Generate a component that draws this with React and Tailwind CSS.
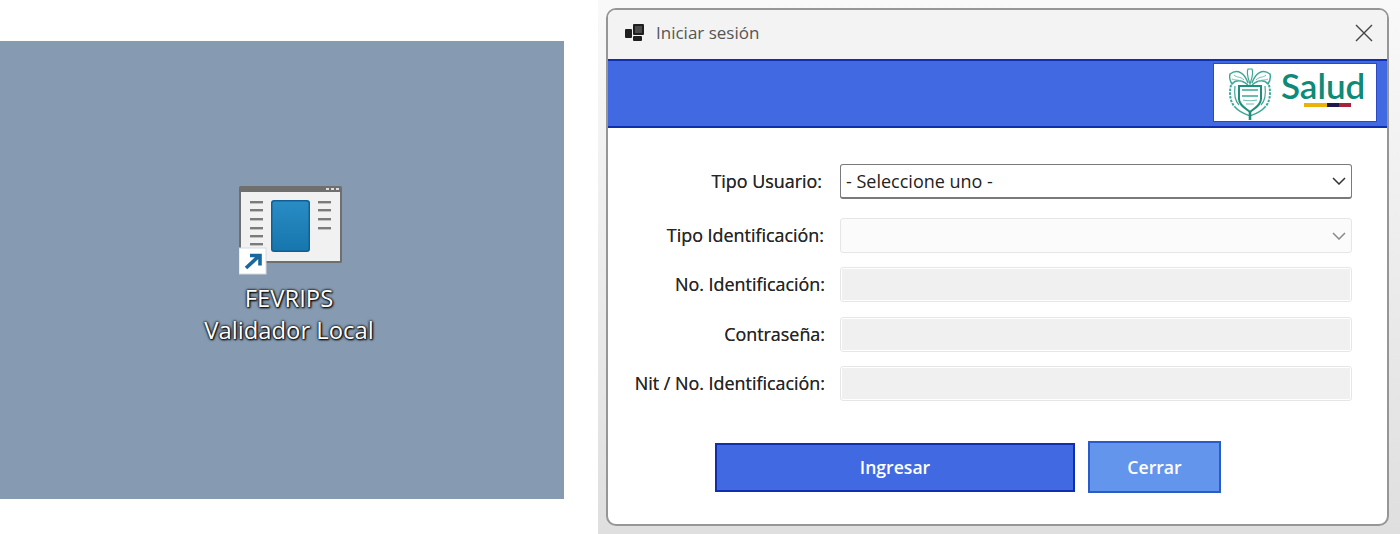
import React from "react";

const font = { fontFamily: '"Open Sans", "Noto Sans", sans-serif' };

function DesktopIcon() {
  return (
    <svg width="106" height="92" viewBox="0 0 106 92" className="block">
      <defs>
        <linearGradient id="pane" x1="0" y1="0" x2="0" y2="1">
          <stop offset="0" stopColor="#2a8cc4" />
          <stop offset="1" stopColor="#1676ae" />
        </linearGradient>
      </defs>
      <rect x="0" y="1" width="103" height="77" fill="#6f6f6f" rx="1.5" />
      <rect x="2" y="7" width="99" height="69" fill="#f1f1f1" />
      <rect x="87" y="3" width="3" height="2" fill="#dedede" />
      <rect x="92" y="3" width="3" height="2" fill="#dedede" />
      <rect x="97" y="3" width="3" height="2" fill="#dedede" />
      {[16, 24, 33, 42, 50, 58].map((y) => (
        <rect key={y} x="11" y={y} width="13" height="2.4" fill="#7b7b7b" />
      ))}
      {[16, 24, 33, 42].map((y) => (
        <rect key={y} x="79" y={y} width="13" height="2.4" fill="#7b7b7b" />
      ))}
      <rect x="32" y="15" width="39" height="52" rx="3" fill="#0f5f95" />
      <rect x="33.5" y="16.5" width="36" height="49" rx="2" fill="url(#pane)" />
      <rect x="0" y="63" width="27" height="26" fill="#fff" stroke="#d5dbe0" />
      <path d="M7 83 L20 71 M11 70.5 L21 70.5 L21 80.5" fill="none" stroke="#17689f" strokeWidth="3.6" />
    </svg>
  );
}

function Shield() {
  return (
    <svg width="46" height="54" viewBox="0 0 46 54" fill="none" stroke="#3fa797" strokeWidth="1" className="block">
      <path d="M21 17 C18 8 11 2 3 8 C2 12 3 15 5 18 C8 14 14 13 21 19" strokeWidth="1.5" />
      <path d="M25 17 C28 8 35 2 43 8 C44 12 43 15 41 18 C38 14 32 13 25 19" strokeWidth="1.5" />
      <path d="M7 9 C10 12 13 10 17 14 M39 9 C36 12 33 10 29 14 M5 13 C9 15 12 13 15 16 M41 13 C37 15 34 13 31 16" strokeWidth="1" stroke="#6fc0b3" />
      <path d="M21 3 C19 7 21 12 23 18 C25 12 27 7 25 3 Z" strokeWidth="1.2" />
      <path d="M4 19 C2 27 3 36 8 41 M42 19 C44 27 43 36 38 41" strokeWidth="2" strokeDasharray="2.5 1.2" />
      <path d="M8 20 C7 28 8 35 12 39 M38 20 C39 28 38 35 34 39" strokeWidth="1.2" />
      <path d="M12 20 H34 V33 C34 39 28 42 23 46 C18 42 12 39 12 33 Z" strokeWidth="2" stroke="#1e8f7d" />
      <path d="M15 24 H31 M15 30 H31" strokeWidth="1.3" />
      <path d="M16 34 C19 35 27 35 30 34 M19 38 H27" strokeWidth="1.2" stroke="#6fc0b3" />
      <path d="M8 41 C12 46 18 48 23 50 C28 48 34 46 38 41" strokeWidth="1.4" />
      <path d="M23 46 V54" strokeWidth="2.6" stroke="#1e8f7d" />
    </svg>
  );
}

function Chevron({ color }) {
  return (
    <svg width="14" height="8" viewBox="0 0 14 8" fill="none" stroke={color} strokeWidth="1.5" className="block">
      <path d="M1 1 L7 7 L13 1" />
    </svg>
  );
}

function Row({ label, className, labelClass, children }) {
  return (
    <div className={`flex items-center h-[35px] ${className}`}>
      <div className={`w-[217px] whitespace-nowrap text-right text-[17.9px] leading-none text-[#262626] [text-shadow:0_0_0.6px_#444] ${labelClass}`}>{label}</div>
      {children}
    </div>
  );
}

function EmptyField() {
  return (
    <div className="ml-[15px] w-[512px] h-[35px] rounded-[3px] border border-[#e6e6e6] bg-white p-[1px]">
      <div className="w-full h-full bg-[#f0f0f0]" />
    </div>
  );
}

export default function App() {
  return (
    <div className="flex w-[1400px] h-[534px] bg-white overflow-hidden" style={font}>
      <div className="w-[564px] h-full pt-[41px] shrink-0">
        <div className="h-[458px] bg-[#869bb1] flex flex-col items-center pt-[144px] pl-[20px]">
          <DesktopIcon />
          <div className="mt-[5px] -ml-[6px] whitespace-nowrap text-center text-white text-[23.8px] leading-[32px] font-medium [text-shadow:0_0_2px_#000,0_0_3px_#000,1px_1px_2px_#000]">
            <div>FEVRIPS</div>
            <div>Validador Local</div>
          </div>
        </div>
      </div>

      <div className="ml-[34px] flex-1 h-full bg-gradient-to-b from-[#f9f9f9] to-[#dfdfdf] pt-[8px] pl-[8px]">
        <div className="w-[783px] h-[518px] rounded-[10px] border-2 border-[#969696] bg-white overflow-hidden">
          <div className="h-[49px] bg-[#f3f3f3] flex items-center pl-[17px] pr-[14px] pb-[3px]">
            <svg width="20" height="18" viewBox="0 0 20 18" className="block">
              <rect x="0" y="5" width="7" height="9" rx="1" fill="#1f1f1f" />
              <rect x="8" y="0" width="11" height="11" rx="1" fill="#1f1f1f" />
              <rect x="10" y="2" width="7" height="7" fill="#4a4a4a" />
              <rect x="8" y="12" width="9" height="5" rx="1" fill="#1f1f1f" />
            </svg>
            <span className="ml-[11px] text-[17px] text-[#555555]">Iniciar sesión</span>
            <svg width="18" height="18" viewBox="0 0 18 18" stroke="#444" strokeWidth="1.4" className="ml-auto block">
              <path d="M1 1 L17 17 M17 1 L1 17" />
            </svg>
          </div>

          <div className="h-[69px] bg-[#4169e1] border-y-2 border-[#0f2fb0] flex justify-end items-start pt-[2px] pr-[10px]">
            <div className="w-[164px] h-[59px] bg-white border border-[#2a49c4] flex items-center pl-[13px]">
              <Shield />
              <div className="ml-[8px] -mt-[10px] flex flex-col items-stretch">
                <span className="text-[35px] leading-[32px] font-semibold text-[#0d8a78]" style={{ fontFamily: '"Lato", sans-serif' }}>Salud</span>
                <div className="flex ml-[23px] h-[4px] w-[47px] mt-[2px]">
                  <div className="w-[23px] bg-[#eab308]" />
                  <div className="w-[12px] bg-[#1e1b4b]" />
                  <div className="w-[12px] bg-[#a8233a]" />
                </div>
              </div>
            </div>
          </div>

          <div className="pt-[36px]">
            <Row label="Tipo Usuario:" labelClass="pr-[3px]">
              <div className="ml-[15px] w-[512px] h-[35px] rounded-[3px] border border-[#7a7a7a] border-b-2 bg-white flex items-center justify-between pl-[5px] pr-[5px]">
                <span className="text-[18px] text-[#222]">- Seleccione uno -</span>
                <Chevron color="#333333" />
              </div>
            </Row>
            <Row label="Tipo Identificación:" labelClass="pr-[1px]" className="mt-[19px]">
              <div className="ml-[15px] w-[512px] h-[35px] rounded-[3px] border border-[#e6e6e6] bg-[#fbfbfb] flex items-center justify-end pr-[5px]">
                <Chevron color="#8a8a8a" />
              </div>
            </Row>
            <Row label="No. Identificación:" className="mt-[14px]"><EmptyField /></Row>
            <Row label="Contraseña:" className="mt-[15px]"><EmptyField /></Row>
            <Row label="Nit / No. Identificación:" className="mt-[14px]"><EmptyField /></Row>

            <div className="flex items-center mt-[40px] ml-[107px]">
              <button className="w-[360px] h-[49px] bg-[#4169e1] border-2 border-[#0f2fb0] text-white text-[17.6px] font-semibold">Ingresar</button>
              <button className="ml-[13px] w-[133px] h-[52px] bg-[#6495ed] border-2 border-[#2a5bc8] text-white text-[17.6px] font-semibold">Cerrar</button>
            </div>
          </div>
        </div>
      </div>
    </div>
  );
}
